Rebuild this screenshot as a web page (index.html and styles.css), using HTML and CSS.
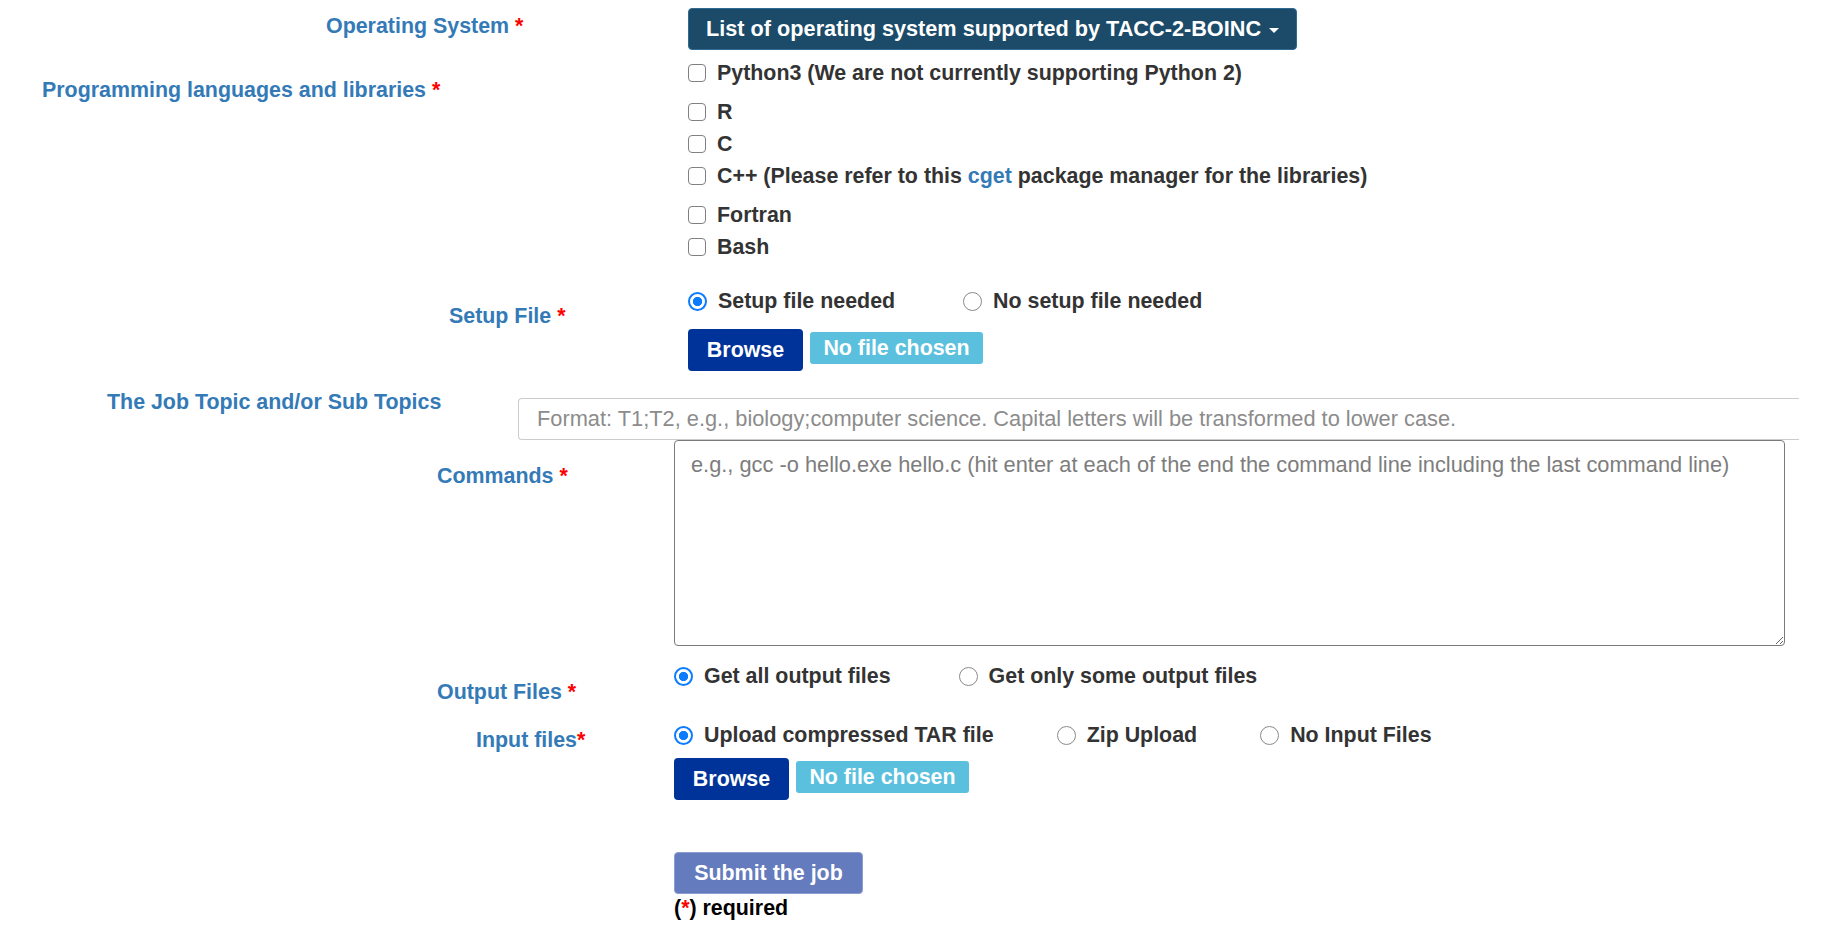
FILE: index.html
```html
<!DOCTYPE html>
<html>
<head>
<meta charset="utf-8">
<link rel="stylesheet" href="styles.css">
</head>
<body>
<form class="form">
  <div class="row row-os">
    <div class="lbl-col"><label class="lbl">Operating System <span class="req">*</span></label></div>
    <div class="field">
      <button type="button" class="dropdown">List of operating system supported by TACC-2-BOINC <span class="caret"></span></button>
    </div>
  </div>

  <div class="row row-langs">
    <div class="lbl-col"><label class="lbl">Programming languages and libraries <span class="req">*</span></label></div>
    <div class="field checks">
      <label class="check"><input type="checkbox"><span>Python3 (We are not currently supporting Python 2)</span></label>
      <label class="check spaced"><input type="checkbox"><span>R</span></label>
      <label class="check"><input type="checkbox"><span>C</span></label>
      <label class="check"><input type="checkbox"><span>C++ (Please refer to this <a href="#" class="link">cget</a> package manager for the libraries)</span></label>
      <label class="check spaced"><input type="checkbox"><span>Fortran</span></label>
      <label class="check"><input type="checkbox"><span>Bash</span></label>
    </div>
  </div>

  <div class="row row-setup">
    <div class="lbl-col"><label class="lbl">Setup File <span class="req">*</span></label></div>
    <div class="field">
      <div class="radios wide">
        <label class="radio"><input type="radio" name="setup" checked><span>Setup file needed</span></label>
        <label class="radio"><input type="radio" name="setup"><span>No setup file needed</span></label>
      </div>
      <div class="file-row">
        <span class="browse">Browse</span>
        <span class="nofile">No file chosen</span>
      </div>
    </div>
  </div>

  <div class="row row-topic">
    <div class="lbl-col"><label class="lbl">The Job Topic and/or Sub Topics</label></div>
    <div class="field">
      <input type="text" class="topic" placeholder="Format: T1;T2, e.g., biology;computer science. Capital letters will be transformed to lower case.">
    </div>
  </div>

  <div class="row row-commands">
    <div class="lbl-col"><label class="lbl">Commands <span class="req">*</span></label></div>
    <div class="field">
      <textarea class="commands" placeholder="e.g., gcc -o hello.exe hello.c (hit enter at each of the end the command line including the last command line)"></textarea>
    </div>
  </div>

  <div class="row row-output">
    <div class="lbl-col"><label class="lbl">Output Files <span class="req">*</span></label></div>
    <div class="field">
      <div class="radios wide">
        <label class="radio"><input type="radio" name="output" checked><span>Get all output files</span></label>
        <label class="radio"><input type="radio" name="output"><span>Get only some output files</span></label>
      </div>
    </div>
  </div>

  <div class="row row-input">
    <div class="lbl-col"><label class="lbl">Input files<span class="req">*</span></label></div>
    <div class="field">
      <div class="radios narrow">
        <label class="radio"><input type="radio" name="input" checked><span>Upload compressed TAR file</span></label>
        <label class="radio"><input type="radio" name="input"><span>Zip Upload</span></label>
        <label class="radio"><input type="radio" name="input"><span>No Input Files</span></label>
      </div>
      <div class="file-row file-row-input">
        <span class="browse">Browse</span>
        <span class="nofile">No file chosen</span>
      </div>
    </div>
  </div>

  <div class="row row-submit">
    <div class="lbl-col"></div>
    <div class="field">
      <button type="button" class="submit">Submit the job</button>
      <div class="required">(<span class="req">*</span>) required</div>
    </div>
  </div>
</form>
</body>
</html>
```

FILE: styles.css
```css
* { box-sizing: border-box; }

html, body {
  margin: 0;
  padding: 0;
  background: #ffffff;
}

body {
  font-family: "Liberation Sans", Arial, Helvetica, sans-serif;
  font-size: 21.4px;
  color: #333333;
}

.form {
  padding-top: 8px;
  margin: 0;
}

.row {
  display: flex;
  align-items: flex-start;
}

.lbl-col {
  flex: none;
}

.lbl {
  display: block;
  font-weight: bold;
  color: #337ab7;
  line-height: 24px;
  white-space: nowrap;
}

.req {
  color: #ff0000;
}

.field {
  flex: none;
}

/* Row-specific placement */
.row-os .lbl-col { width: 688px; padding-left: 326px; padding-top: 6px; }

.row-langs { margin-top: 11px; }
.row-langs .lbl-col { width: 688px; padding-left: 42px; padding-top: 17px; }

.row-setup { margin-top: 30px; }
.row-setup .lbl-col { width: 688px; padding-left: 449px; padding-top: 15px; }

.row-topic { margin-top: 19px; }
.row-topic .lbl-col { width: 518px; padding-left: 107px; padding-top: 0; }

.row-commands { margin-top: 0; }
.row-commands .lbl-col { width: 674px; padding-left: 437px; padding-top: 24px; }

.row-output { margin-top: 18px; }
.row-output .lbl-col { width: 674px; padding-left: 437px; padding-top: 16px; }

.row-input { margin-top: 19px; }
.row-input .lbl-col { width: 674px; padding-left: 476px; padding-top: 5px; }

.row-submit { margin-top: 52px; }
.row-submit .lbl-col { width: 674px; }

/* Dropdown */
.dropdown {
  display: flex;
  align-items: center;
  height: 42px;
  width: 609px;
  padding: 0 16px 0 17px;
  background: #1b4b68;
  border: 1px solid #2e6a92;
  border-radius: 4px;
  color: #ffffff;
  font-family: inherit;
  font-size: 21.7px;
  font-weight: bold;
  white-space: nowrap;
}

.caret {
  display: inline-block;
  width: 0;
  height: 0;
  margin-left: 8px;
  margin-top: 2px;
  border-left: 5px solid transparent;
  border-right: 5px solid transparent;
  border-top: 5px solid #ffffff;
}

/* Checkboxes */
.checks {
  display: flex;
  flex-direction: column;
}

.check {
  display: flex;
  align-items: center;
  height: 24px;
  margin-top: 8px;
  font-weight: bold;
  color: #333333;
  white-space: nowrap;
}

.check:first-child { margin-top: 0; }
.check.spaced { margin-top: 15px; }

.check input {
  -webkit-appearance: none;
  appearance: none;
  flex: none;
  width: 18px;
  height: 18px;
  margin: 0 11px 0 0;
  border: 1.5px solid #808080;
  border-radius: 4px;
  background: #ffffff;
}

.link {
  color: #337ab7;
  text-decoration: none;
}

/* Radios */
.radios {
  display: flex;
  align-items: center;
  height: 24px;
}

.radios.wide { gap: 68px; }
.radios.narrow { gap: 63px; }

.radio {
  display: flex;
  align-items: center;
  font-weight: bold;
  color: #333333;
  white-space: nowrap;
}

.radio input {
  -webkit-appearance: none;
  appearance: none;
  flex: none;
  width: 19px;
  height: 19px;
  margin: 0 11px 0 0;
  border: 1.3px solid #8a8a8a;
  border-radius: 50%;
  background: #ffffff;
}

.radio input:checked {
  border: 2px solid #0b7bff;
  background: radial-gradient(circle, #0b7bff 0 4.3px, #ffffff 5px);
}

/* File inputs */
.file-row {
  display: flex;
  align-items: flex-start;
  margin-top: 16px;
}

.file-row-input { margin-top: 11px; }

.browse {
  display: flex;
  align-items: center;
  justify-content: center;
  height: 42px;
  width: 115px;
  background: #003399;
  border-radius: 4px;
  color: #ffffff;
  font-weight: bold;
}

.nofile {
  display: flex;
  align-items: center;
  justify-content: center;
  height: 32px;
  width: 173px;
  margin-left: 7px;
  margin-top: 3px;
  background: #5bc0de;
  border-radius: 3px;
  color: #ffffff;
  font-weight: bold;
}

/* Topic input */
.topic {
  display: block;
  margin-top: 8px;
  width: 1281px;
  height: 42px;
  padding: 0 18px;
  border: 1px solid #cccccc;
  border-right: 0;
  border-radius: 4px 0 0 4px;
  font-family: inherit;
  font-size: 21.8px;
  color: #555555;
  background: #ffffff;
  outline: none;
}

.topic::placeholder { color: #8c8c8c; }

/* Commands textarea */
.commands {
  display: block;
  width: 1111px;
  height: 206px;
  padding: 12px 16px;
  border: 1.5px solid #7a7a7a;
  border-radius: 4px;
  font-family: inherit;
  font-size: 21.8px;
  line-height: 24px;
  color: #555555;
  background: #ffffff;
  outline: none;
  resize: both;
}

.commands::placeholder { color: #7d7d7d; }

/* Submit */
.submit {
  display: block;
  height: 42px;
  width: 189px;
  padding: 0;
  background: #647bbd;
  border: 1px solid #8a9cd0;
  border-radius: 4px;
  color: #ffffff;
  font-family: inherit;
  font-size: 21.4px;
  font-weight: bold;
}

.required {
  margin-top: 2px;
  line-height: 24px;
  font-weight: bold;
  color: #000000;
}
```
